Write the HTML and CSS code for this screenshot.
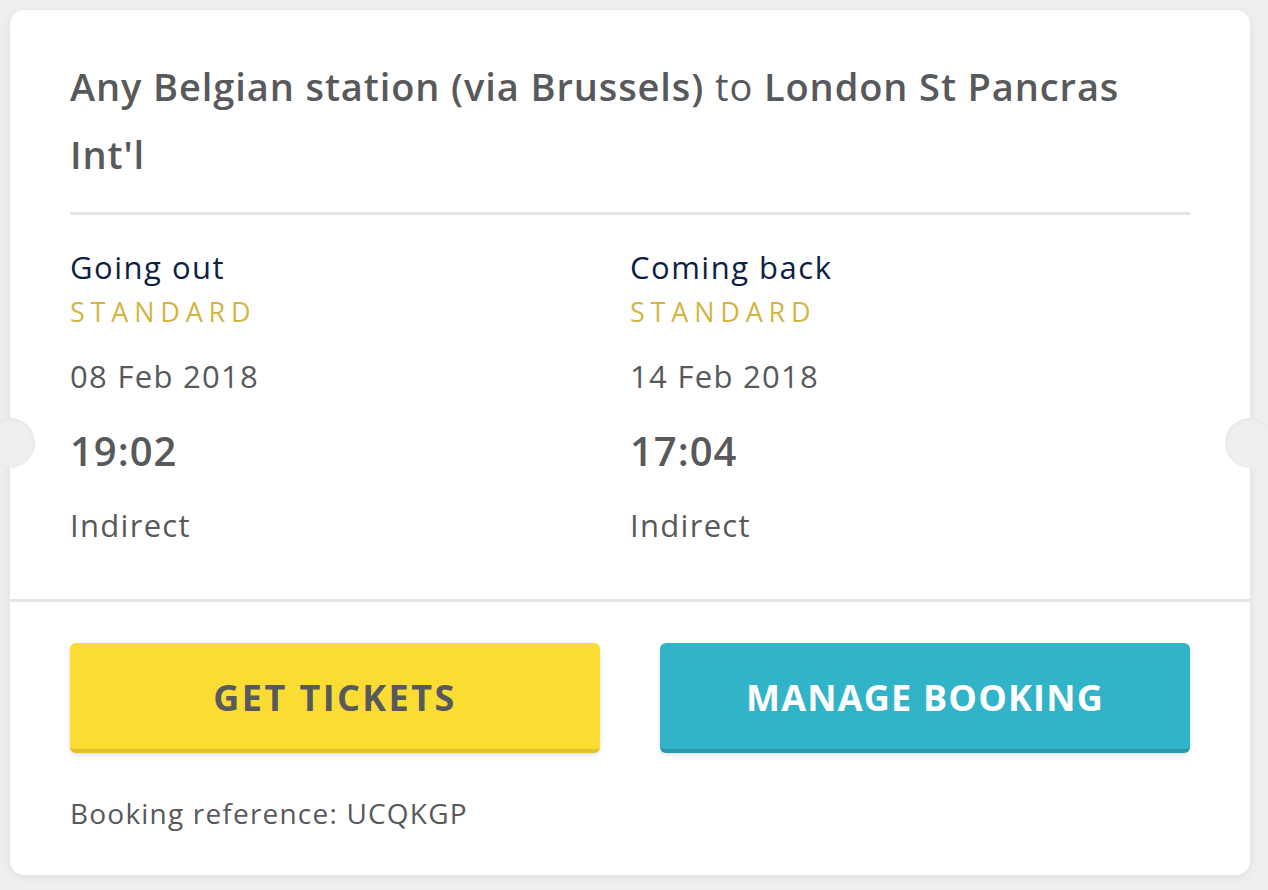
FILE: index.html
```
<!DOCTYPE html>
<html lang="en">
<head>
<meta charset="utf-8">
<title>Booking</title>
<link rel="stylesheet" href="styles.css">
</head>
<body>
<div class="card">
  <span class="notch notch-left"></span>
  <span class="notch notch-right"></span>
  <div class="top">
    <h1 class="route"><strong>Any Belgian station (via Brussels)</strong> <span class="to">to</span> <strong>London St Pancras</strong> <strong>Int'l</strong></h1>
    <div class="rule"></div>
    <div class="legs">
      <div class="leg">
        <div class="leg-title">Going out</div>
        <div class="leg-class">STANDARD</div>
        <div class="leg-date">08 Feb 2018</div>
        <div class="leg-time">19:02</div>
        <div class="leg-type">Indirect</div>
      </div>
      <div class="leg">
        <div class="leg-title">Coming back</div>
        <div class="leg-class">STANDARD</div>
        <div class="leg-date">14 Feb 2018</div>
        <div class="leg-time">17:04</div>
        <div class="leg-type">Indirect</div>
      </div>
    </div>
  </div>
  <div class="bottom">
    <div class="actions">
      <a class="btn btn-yellow" href="#">GET TICKETS</a>
      <a class="btn btn-teal" href="#">MANAGE BOOKING</a>
    </div>
    <div class="ref">Booking reference: UCQKGP</div>
  </div>
</div>
</body>
</html>
```
FILE: styles.css
```
* { box-sizing: border-box; }
html, body { margin: 0; padding: 0; }
body {
  background: #efefef;
  font-family: "Open Sans", Lato, sans-serif;
  color: #58595b;
  padding: 10px 18px 16px 10px;
}
.card {
  position: relative;
  width: 1240px;
  background: #fff;
  border-radius: 14px;
  box-shadow: 0 2px 8px rgba(0,0,0,0.08);
}
.notch {
  position: absolute;
  top: 408px;
  width: 50px;
  height: 50px;
  border-radius: 50%;
  background: #efefef;
  box-shadow: inset 0 1px 4px rgba(0,0,0,0.06);
}
.notch-left { left: -25px; }
.notch-right { right: -25px; }
.top {
  padding: 42px 60px 54px;
  border-bottom: 3px solid #e5e5e5;
}
.route {
  margin: 0;
  font-size: 38px;
  line-height: 68px;
  font-weight: 400;
  letter-spacing: 0.9px;
  color: #58595b;
}
.route strong { font-weight: 600; }
.rule {
  margin-top: 24px;
  height: 3px;
  background: #e6e6e6;
}
.legs {
  display: grid;
  grid-template-columns: 560px 560px;
  padding-top: 32px;
}
.leg-title {
  font-size: 31px;
  line-height: 40px;
  letter-spacing: 1.5px;
  color: #0e1f45;
}
.leg-class {
  margin-top: 5px;
  font-size: 27px;
  line-height: 40px;
  letter-spacing: 5.8px;
  color: #d3b542;
}
.leg-date {
  margin-top: 24px;
  font-size: 31px;
  line-height: 40px;
  letter-spacing: 1.3px;
}
.leg-time {
  margin-top: 30px;
  font-size: 40px;
  line-height: 50px;
  font-weight: 600;
  letter-spacing: 1px;
}
.leg-type {
  margin-top: 29px;
  font-size: 31px;
  line-height: 40px;
  letter-spacing: 1.3px;
}
.bottom {
  padding: 41px 60px 42px;
}
.actions {
  display: grid;
  grid-template-columns: 530px 530px;
  column-gap: 60px;
}
.btn {
  display: flex;
  align-items: center;
  justify-content: center;
  height: 110px;
  border-radius: 6px;
  font-size: 36px;
  font-weight: 700;
  text-decoration: none;
  padding-top: 2px;
  box-shadow: 0 2px 4px rgba(0,0,0,0.12);
}
.btn-yellow {
  background: #fadc33;
  border-bottom: 4px solid #e2c22b;
  color: #58595b;
  letter-spacing: 2.4px;
}
.btn-teal {
  background: #32b4c8;
  border-bottom: 4px solid #2698aa;
  color: #fff;
  letter-spacing: 1.2px;
}
.ref {
  margin-top: 40px;
  font-size: 28px;
  line-height: 40px;
  letter-spacing: 1.2px;
}
```
